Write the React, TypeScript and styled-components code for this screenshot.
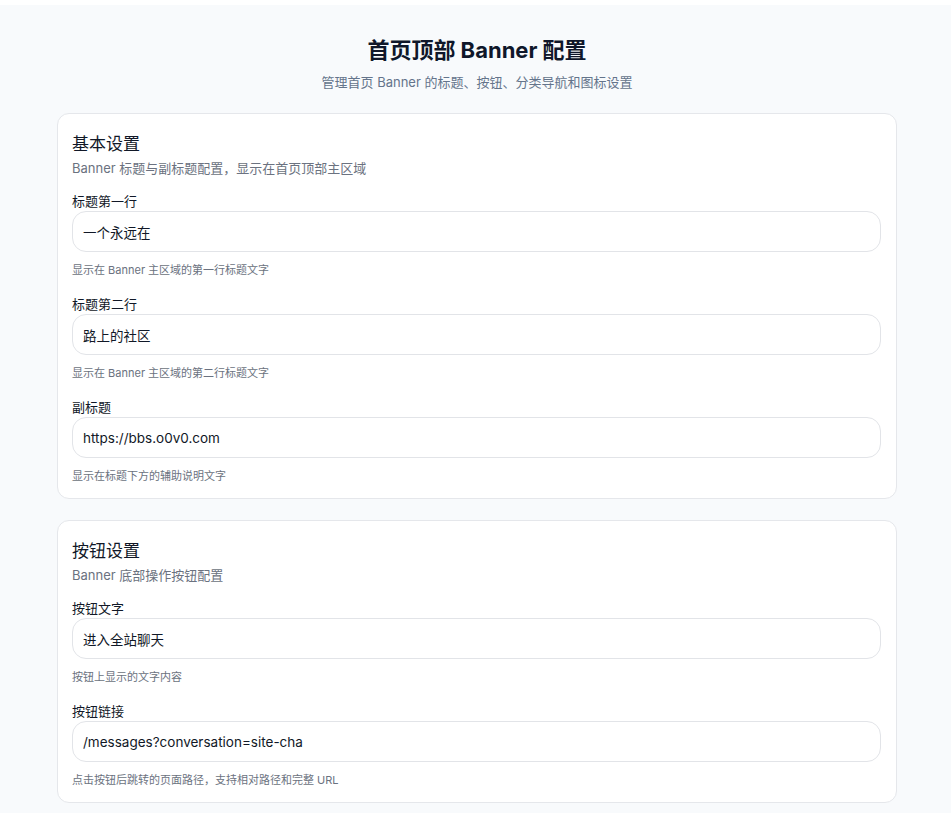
import React from 'react';
import styled, { createGlobalStyle } from 'styled-components';

const GlobalStyle = createGlobalStyle`
  html, body {
    margin: 0;
    padding: 0;
    background: #f8fafc;
  }
  body {
    font-family: Inter, "Noto Sans CJK SC", sans-serif;
    color: #111827;
  }
`;

const Page = styled.div`
  border-top: 5px solid #ffffff;
  padding: 30px 54px 10px 57px;
  min-height: 100vh;
  box-sizing: border-box;
`;

const Header = styled.header`
  text-align: center;
  margin-bottom: 22px;
`;

const Heading = styled.h1`
  margin: 0;
  font-size: 22px;
  line-height: 30px;
  font-weight: 700;
  color: #0f172a;
`;

const Lead = styled.p`
  margin: 8px 0 0;
  font-size: 13px;
  line-height: 18px;
  color: #64748b;
`;

const Stack = styled.div`
  display: flex;
  flex-direction: column;
  gap: 21px;
`;

const Card = styled.section`
  background: #ffffff;
  border: 1px solid #e5e7eb;
  border-radius: 12px;
  padding: 18px 15px 14px 14px;
`;

const CardTitle = styled.h2`
  margin: 0;
  font-size: 17px;
  line-height: 24px;
  font-weight: 400;
  color: #111827;
`;

const CardDesc = styled.p`
  margin: 0 0 12px;
  font-size: 13px;
  line-height: 24px;
  color: #6b7280;
`;

const Fields = styled.div`
  display: flex;
  flex-direction: column;
  gap: 17px;
`;

const Field = styled.div`
  display: flex;
  flex-direction: column;
`;

const Label = styled.label`
  font-size: 13px;
  line-height: 18px;
  color: #111827;
  margin-bottom: 1px;
`;

const Input = styled.input`
  height: 41px;
  box-sizing: border-box;
  border: 1px solid #e2e4e8;
  border-radius: 14px;
  padding: 0 10px;
  font-family: inherit;
  font-size: 13.5px;
  color: #111827;
  background: #ffffff;
  outline: none;
`;

const Help = styled.p`
  margin: 10px 0 0;
  font-size: 11px;
  line-height: 16px;
  color: #6b7280;
`;

type FieldDef = { label: string; value: string; help: string };

const sections: { title: string; desc: string; fields: FieldDef[] }[] = [
  {
    title: '基本设置',
    desc: 'Banner 标题与副标题配置，显示在首页顶部主区域',
    fields: [
      { label: '标题第一行', value: '一个永远在', help: '显示在 Banner 主区域的第一行标题文字' },
      { label: '标题第二行', value: '路上的社区', help: '显示在 Banner 主区域的第二行标题文字' },
      { label: '副标题', value: 'https://bbs.o0v0.com', help: '显示在标题下方的辅助说明文字' },
    ],
  },
  {
    title: '按钮设置',
    desc: 'Banner 底部操作按钮配置',
    fields: [
      { label: '按钮文字', value: '进入全站聊天', help: '按钮上显示的文字内容' },
      {
        label: '按钮链接',
        value: '/messages?conversation=site-cha',
        help: '点击按钮后跳转的页面路径，支持相对路径和完整 URL',
      },
    ],
  },
];

const App: React.FC = () => {
  return (
    <>
      <GlobalStyle />
      <Page>
        <Header>
          <Heading>首页顶部 Banner 配置</Heading>
          <Lead>管理首页 Banner 的标题、按钮、分类导航和图标设置</Lead>
        </Header>
        <Stack>
          {sections.map((s) => (
            <Card key={s.title}>
              <CardTitle>{s.title}</CardTitle>
              <CardDesc>{s.desc}</CardDesc>
              <Fields>
                {s.fields.map((f) => (
                  <Field key={f.label}>
                    <Label>{f.label}</Label>
                    <Input defaultValue={f.value} />
                    <Help>{f.help}</Help>
                  </Field>
                ))}
              </Fields>
            </Card>
          ))}
        </Stack>
      </Page>
    </>
  );
};

export default App;
